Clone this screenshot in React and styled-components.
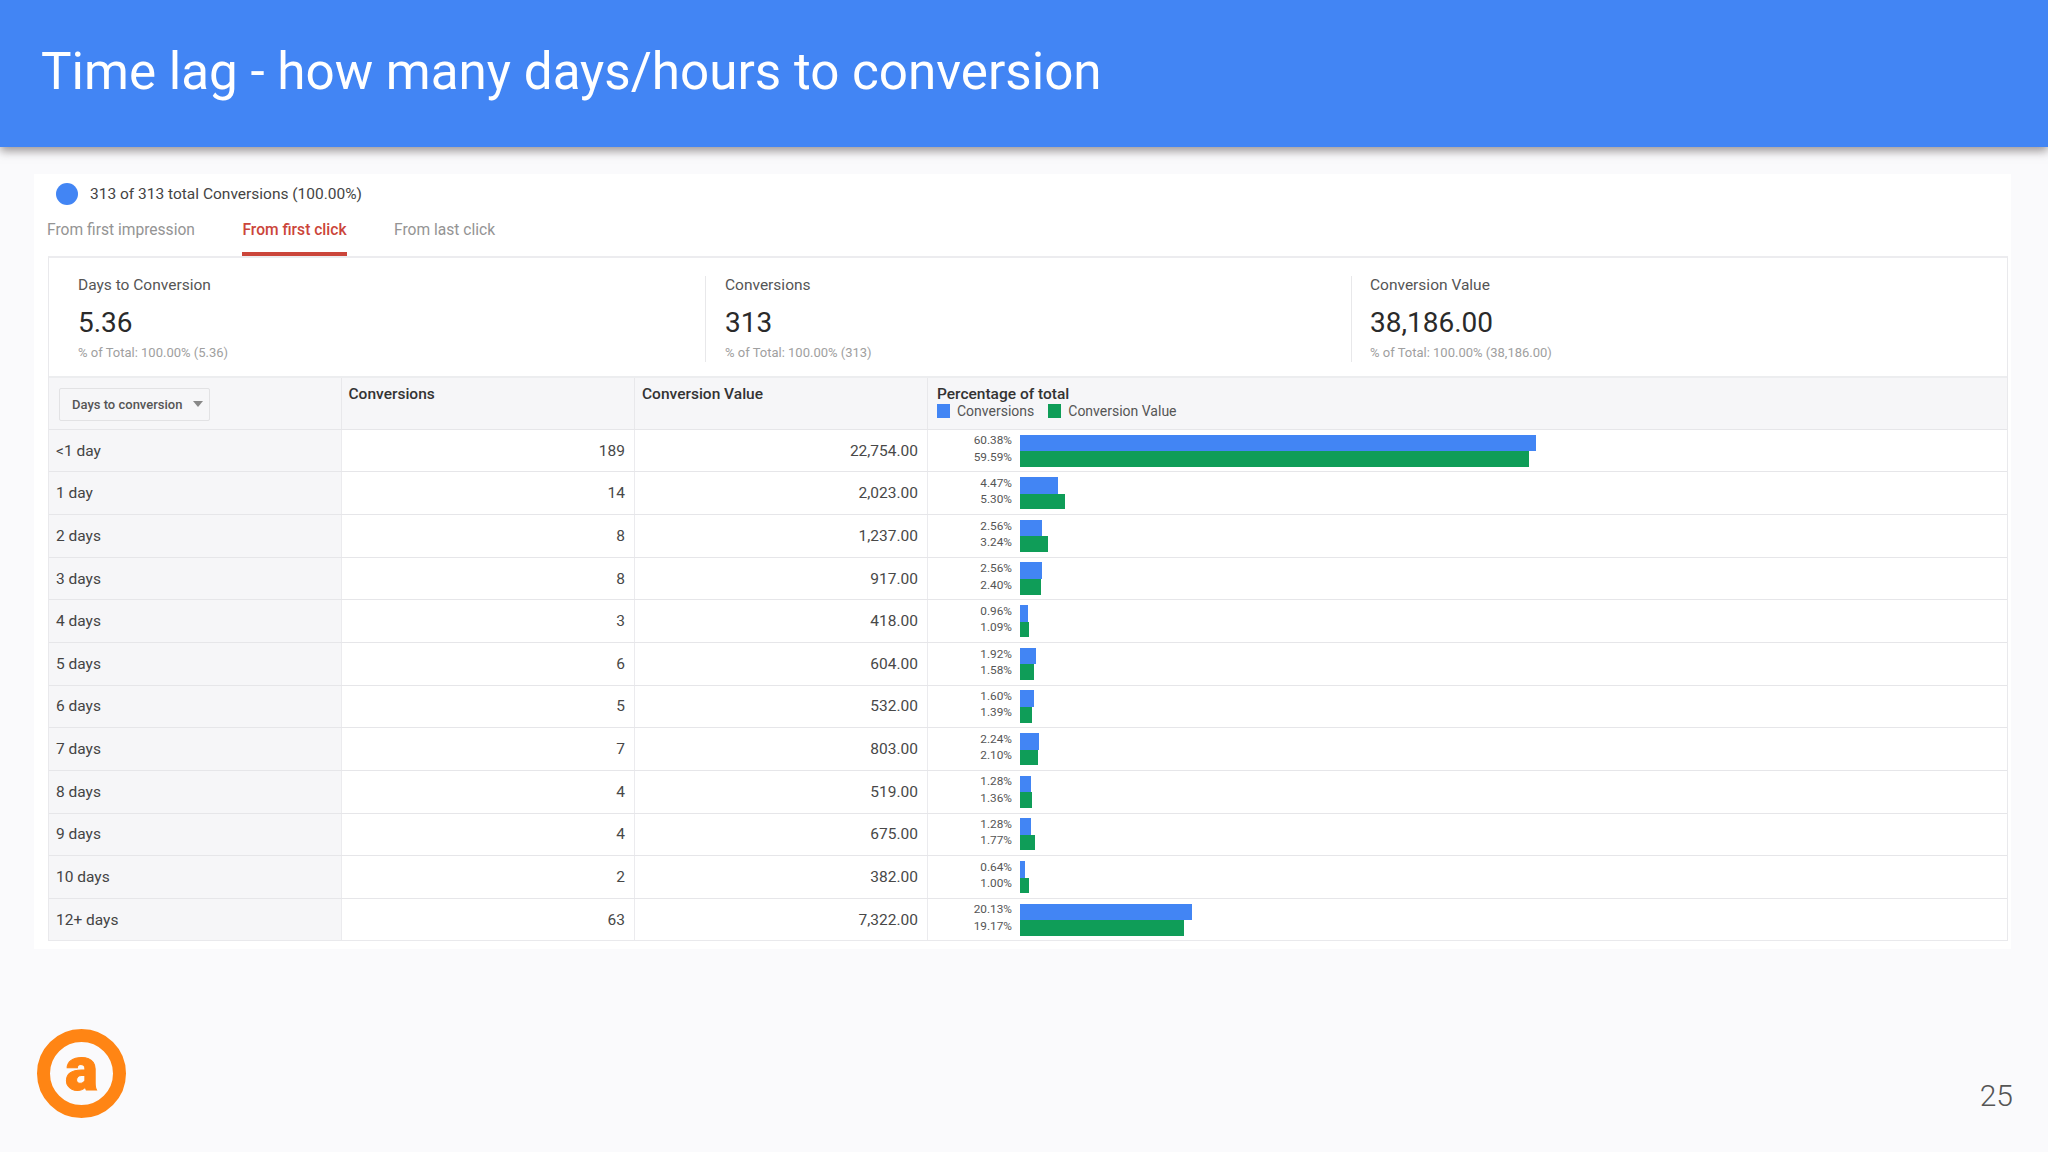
import React from 'react'
import styled, { createGlobalStyle } from 'styled-components'

const Global = createGlobalStyle`
html, body {
  margin: 0;
  padding: 0;
  background: #fafafc;
}
body {
  font-family: Roboto, "Liberation Sans", sans-serif;
  color: #3c3c3c;
}
`

const Page = styled.div`
width: 2048px;
height: 1152px;
display: flex;
flex-direction: column;
overflow: hidden;
`
const Header = styled.header`
flex: none;
height: 146.5px;
box-sizing: border-box;
padding: 0 0 3px 41px;
display: flex;
align-items: center;
background: #4285f4;
box-shadow: 0 4px 9px rgba(60, 50, 50, 0.5);
position: relative;
`
const Title = styled.h1`
margin: 0;
font-size: 51.2px;
font-weight: 400;
color: #fff;
`
const Card = styled.main`
flex: none;
width: 1977px;
height: 775px;
margin: 27px 0 0 34px;
box-sizing: border-box;
padding: 0 3px 0 14px;
background: #fff;
display: flex;
flex-direction: column;
`
const Segment = styled.div`
height: 41px;
padding-left: 8px;
display: flex;
align-items: center;
gap: 12px;
font-size: 15.5px;
color: #444;
`
const Dot = styled.span`
width: 22px;
height: 22px;
border-radius: 50%;
background: #4285f4;
`
const Tabs = styled.nav`
height: 41.7px;
margin-left: -1px;
display: flex;
gap: 47.5px;
`
const Tab = styled.div`
height: 41.7px;
box-sizing: border-box;
padding-top: 6px;
font-size: 15.6px;
line-height: 18px;
color: ${p => (p.$active ? '#cb453a' : '#949494')};
font-weight: ${p => (p.$active ? 500 : 400)};
border-bottom: 4px solid ${p => (p.$active ? '#cb453a' : 'transparent')};
`
const Panel = styled.section`
border: 1px solid #e9e9ec;
border-top: 2px solid #ececef;
flex: none;
height: 684.5px;
box-sizing: border-box;
display: flex;
flex-direction: column;
`
const Kpis = styled.div`
flex: none;
height: 118px;
display: grid;
grid-template-columns: 656px 646px 1fr;
align-items: start;
`
const Kpi = styled.div`
height: 86px;
margin-top: 17.5px;
box-sizing: border-box;
padding-left: ${p => p.$pad}px;
border-left: ${p => (p.$divider ? '1px solid #e8e8ea' : 'none')};
`
const KpiLabel = styled.div`
font-size: 15.5px;
line-height: 18px;
color: #555;
`
const KpiValue = styled.div`
margin-top: 12.5px;
font-size: 28px;
line-height: 34px;
color: #2a2a2a;
`
const KpiSub = styled.div`
margin-top: 4.5px;
font-size: 13px;
line-height: 15px;
color: #a0a0a0;
`
const Row = styled.div`
flex: none;
height: ${p => (p.$head ? '52.6px' : '42.65px')};
box-sizing: border-box;
display: grid;
grid-template-columns: 291.5px 293.5px 293px 1fr;
border-top: 2px solid #ecedef;
background: ${p => (p.$head ? '#f6f6f8' : 'transparent')};
`
const RowLine = styled(Row)`
border-top: 1px solid #e6e6e9;
`
const LabelCell = styled.div`
background: #f6f6f8;
padding-left: 7px;
display: flex;
align-items: center;
font-size: 15.5px;
color: #444;
`
const NumCell = styled.div`
border-left: 1px solid #ebebee;
padding-right: ${p => p.$right}px;
display: flex;
align-items: center;
justify-content: flex-end;
font-size: 15.5px;
color: #484848;
`
const HeadCell = styled.div`
border-left: 1px solid #e8e8eb;
padding: 7px 0 0 ${p => p.$left || 7}px;
font-size: 15.5px;
line-height: 18px;
font-weight: 500;
color: #333;
`
const Select = styled.div`
width: 151px;
height: 33px;
margin: 9.5px 0 0 10px;
box-sizing: border-box;
padding: 0 6px 0 12px;
border: 1px solid #e2e2e4;
border-radius: 2px;
display: flex;
align-items: center;
justify-content: space-between;
font-size: 13px;
font-weight: 500;
color: #555;
`
const Caret = styled.span`
width: 0;
height: 0;
border-left: 5px solid transparent;
border-right: 5px solid transparent;
border-top: 6px solid #888;
`
const SelectCell = styled.div`
background: #f6f6f8;
`
const Legend = styled.div`
display: flex;
align-items: center;
height: 15px;
font-size: 14px;
font-weight: 400;
color: #555;
`
const Swatch = styled.span`
width: 13px;
height: 14px;
margin: 0 7px 0 ${p => (p.$gap || 0)}px;
background: ${p => p.$color};
`
const ChartCell = styled.div`
border-left: 1px solid #ebebee;
display: flex;
align-items: center;
`
const Percents = styled.div`
width: 84px;
margin: -4px 8px 0 0;
text-align: right;
font-size: 11.8px;
line-height: 16.3px;
color: #555;
`
const Bars = styled.div`
display: flex;
flex-direction: column;
`
const Bar = styled.div`
height: ${p => p.$h}px;
background: ${p => p.$color};
`
const Footer = styled.footer`
flex: 1;
box-sizing: border-box;
padding: 80px 35px 34px 37px;
display: flex;
justify-content: space-between;
align-items: flex-end;
`
const Logo = styled.div`
width: 89px;
height: 89px;
box-sizing: border-box;
border: 13px solid #ff8514;
border-radius: 50%;
display: flex;
align-items: center;
justify-content: center;
`
const LogoLetter = styled.span`
font-family: Roboto, sans-serif;
font-size: 62px;
line-height: 58px;
font-weight: 900;
color: #ff8514;
-webkit-text-stroke: 1px #ff8514;
margin-top: -9px;
`
const PageNum = styled.div`
font-size: 30px;
line-height: 30px;
font-weight: 300;
color: #555;
margin-bottom: 7px;
`

const PX_PER_PCT = 8.55

const rows = [
  ['<1 day', '189', '22,754.00', 60.38, 59.59],
  ['1 day', '14', '2,023.00', 4.47, 5.3],
  ['2 days', '8', '1,237.00', 2.56, 3.24],
  ['3 days', '8', '917.00', 2.56, 2.4],
  ['4 days', '3', '418.00', 0.96, 1.09],
  ['5 days', '6', '604.00', 1.92, 1.58],
  ['6 days', '5', '532.00', 1.6, 1.39],
  ['7 days', '7', '803.00', 2.24, 2.1],
  ['8 days', '4', '519.00', 1.28, 1.36],
  ['9 days', '4', '675.00', 1.28, 1.77],
  ['10 days', '2', '382.00', 0.64, 1],
  ['12+ days', '63', '7,322.00', 20.13, 19.17],
]

const App = () => (
  <Page>
    <Global />
    <Header>
      <Title>Time lag - how many days/hours to conversion</Title>
    </Header>
    <Card>
      <Segment>
        <Dot />
        313 of 313 total Conversions (100.00%)
      </Segment>
      <Tabs>
        <Tab>From first impression</Tab>
        <Tab $active>From first click</Tab>
        <Tab>From last click</Tab>
      </Tabs>
      <Panel>
        <Kpis>
          <Kpi $pad={29}>
            <KpiLabel>Days to Conversion</KpiLabel>
            <KpiValue>5.36</KpiValue>
            <KpiSub>% of Total: 100.00% (5.36)</KpiSub>
          </Kpi>
          <Kpi $pad={19} $divider>
            <KpiLabel>Conversions</KpiLabel>
            <KpiValue>313</KpiValue>
            <KpiSub>% of Total: 100.00% (313)</KpiSub>
          </Kpi>
          <Kpi $pad={18} $divider>
            <KpiLabel>Conversion Value</KpiLabel>
            <KpiValue>38,186.00</KpiValue>
            <KpiSub>% of Total: 100.00% (38,186.00)</KpiSub>
          </Kpi>
        </Kpis>
        <Row $head>
          <SelectCell>
            <Select>
              Days to conversion
              <Caret />
            </Select>
          </SelectCell>
          <HeadCell>Conversions</HeadCell>
          <HeadCell>Conversion Value</HeadCell>
          <HeadCell $left={9}>
            Percentage of total
            <Legend>
              <Swatch $color="#4285f4" />
              Conversions
              <Swatch $color="#0f9d58" $gap={14} />
              Conversion Value
            </Legend>
          </HeadCell>
        </Row>
        {rows.map(([label, conv, value, a, b]) => (
          <RowLine key={label}>
            <LabelCell>{label}</LabelCell>
            <NumCell $right={9}>{conv}</NumCell>
            <NumCell $right={9}>{value}</NumCell>
            <ChartCell>
              <Percents>
                {a.toFixed(2)}%<br />
                {b.toFixed(2)}%
              </Percents>
              <Bars>
                <Bar $h={16.7} $color="#4285f4" style={{ width: a * PX_PER_PCT }} />
                <Bar $h={15.5} $color="#0f9d58" style={{ width: b * PX_PER_PCT }} />
              </Bars>
            </ChartCell>
          </RowLine>
        ))}
      </Panel>
    </Card>
    <Footer>
      <Logo>
        <LogoLetter>a</LogoLetter>
      </Logo>
      <PageNum>25</PageNum>
    </Footer>
  </Page>
)

export default App
